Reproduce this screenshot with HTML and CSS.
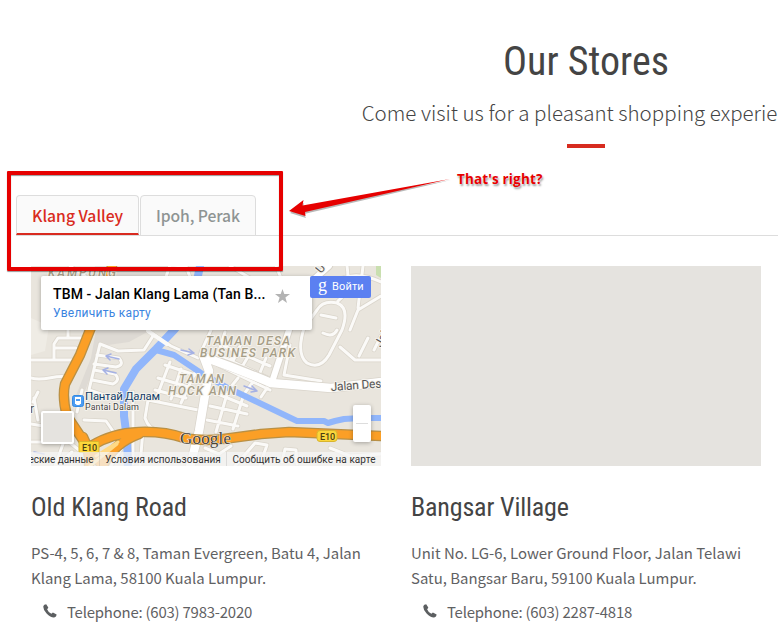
FILE: index.html
```html
<!DOCTYPE html>
<html lang="en">
<head>
<meta charset="utf-8">
<title>Our Stores</title>
<link rel="stylesheet" href="styles.css">
</head>
<body>
<main class="container">
  <header class="heading">
    <h1>Our Stores</h1>
    <p>Come visit us for a pleasant shopping experience</p>
    <div class="rule"></div>
  </header>
  <nav class="tabs">
    <a class="tab active">Klang Valley</a>
    <a class="tab">Ipoh, Perak</a>
  </nav>
  <section class="stores">
    <article class="store">
      <div class="map">
        <svg class="tiles" viewBox="31 266 350 200" width="350" height="200" fill="none" stroke-linecap="round" stroke-linejoin="round">
          <rect x="31" y="266" width="350" height="200" fill="#e9e5dd"/>
          <path fill="#dedad4" d="M96 330h55l-22 12-28 4-14 40-10 24-2-12 16-40zM95 266h73v14H90z"/>
          <path fill="#efece5" d="M31 318l18 8-4 25-14 4z"/>
          <path fill="#c9dfaf" d="M376 266h5v12l-5-3z"/>
          <g stroke="#dad5cb" stroke-width="4.500">
            <path id="minor" d="M31 360h45M54 358v-14l4-6h26M56 348h20M68 338v-9M31 378c14 4 24-4 36-1M33 402l5-10M38 420l-4-22M31 424l24 4M31 442h38l10 8M56 466l16-14M55 466l8-22
            M100 344l18 7 26-1 9-14M100 344l-11 46 18 6M97 355l22 3q6 7-3 9l-22-3M94 370l21 4q6 6-2 10l-21-4M148 331l23 15 27 12
            M165 365l30 10M158 378l34 10M155 390l31 8M170 362l-13 34M181 369l-10 30M195 373l-14 30M148 400l50 10M148 400l-3 18q4 12 14 13l33 4M133 392v72M140 466l3-36M84 420l22 1 9 13M111 466l12-20M82 390l-5 22
            M218 365l30-14M225 332l-9 28M240 346l-11 24M252 350l-13 22M266 358l-9 22M224 346l46 20M218 355l50 23M220 366l50 24M238 378l-8 10M253 382l-9 12M269 385l-8 12M213 392l34 14M210 406l37 8M207 420l31 6M227 394l-11 38M243 397l-10 32
            M211 330l-10 22M290 345l-6 30 37 6M304 328q-8 26 3 35 13 7 22-8l13-25q8-22-5-27-14-3-20 7zM323 333q10 5 14-3M321 315l15 3M350 330l8-20 23-14M340 347l15 13h26M368 338l-9 18M374 350l7-14M347 266q4 26-9 35M363 266l-5 42M339 279q20-8 42 3M235 466l20-23 12 2-7 20M282 462l3-13 11 1 1 14M205 448l14 6 12-8M330 448l20 8 31-2M70 266l15 10M165 280l5-15 16 1 5 14M230 266l20 12M276 266l5 12"/>
          </g>
          <use href="#minor" stroke="#fbfaf8" stroke-width="3"/>
          <path stroke="#91b6fb" stroke-width="6" d="M381 418h-20l-17 1-9 2-7 2-4-2h-27L228 388 201 373 174 355l-18-5"/>
          <path stroke="#91b6fb" stroke-width="8" d="M200 266Q192 310 174 330L156 349l-20 20-12 20v27l3 23 1 28"/>
          <path stroke="#fbfaf8" stroke-width="4" d="M148 331l19 13"/>
          <path stroke="#d9d4cb" stroke-width="10" d="M203 355l6 16-10 60-9 36M207 358q36 12 64 25l60 5 51-6"/>
          <path stroke="#d9d4cb" stroke-width="8" d="M273 379l16-49 15-42 25-22"/>
          <path stroke="#fff" stroke-width="8.500" d="M203 355l6 16-10 60-9 36M204 357q34 12 67 26l60 5 51-6"/>
          <path stroke="#fff" stroke-width="6" d="M273 379l16-49 15-42 25-22"/>
          <g stroke="#b99045" stroke-width="10.500">
            <path id="express" d="M112 266Q104 300 90 330L80 355 65 384Q62 398 67 416L87 446 108 473M83 437Q90 450 89 467M91 446Q112 433 139 432 164 431 184 438 207 442 231 438l30-4 28-2 92 4M102 468Q112 444 139 434"/>
          </g>
          <use href="#express" stroke="#fb9f26" stroke-width="8"/>
          <path stroke="#ffd985" stroke-width="3" d="M96 456l22-14M90 466l27-22"/>
          <path stroke="#a5b1e4" stroke-width="1.500" d="M106 356l13 3m-13-3l5-2m-5 2l4 4M103 370l13 3m-13-3l5-2m-5 2l4 4M181 350l13 3m-5-4l5 4-6 2M244 386l13 5m-5-5l5 5-6 1M34 452l10 2"/>
          <g class="area">
            <text x="48" y="276.500" textLength="68">KAMPUNG</text>
            <text x="206" y="345" textLength="84">TAMAN DESA</text>
            <text x="200" y="357" textLength="95">BUSINES PARK</text>
            <text x="179" y="383" textLength="45">TAMAN</text>
            <text x="168" y="395" textLength="68">HOCK ANN</text>
          </g>
          <g class="street">
            <text x="331" y="391" textLength="57" transform="rotate(-4 331 391)">Jalan Desa</text>
            <text x="321" y="274" transform="rotate(-50 321 274)">U</text>
            <text x="381" y="348" transform="rotate(-60 381 348)">Jala</text>
            <text x="30" y="413">r</text>
          </g>
          <text class="station" x="85" y="400" textLength="75">Пантай Далам</text>
          <text class="station-latin" x="85" y="410" textLength="54">Pantai Dalam</text>
          <rect x="72.500" y="395.500" width="11" height="11" rx="2" fill="#4c9cf2" stroke="#338be5"/>
          <path fill="#fff" d="M75 397h6v7h-6zM74 405h2l1-2h2l1 2h2"/>
          <path fill="#4c9cf2" d="M76 399h4v2h-4z"/>
          <g fill="#fbd63b" stroke="#d9b52d"><rect x="79" y="441.500" width="20" height="11" rx="1"/><rect x="317" y="430.500" width="20" height="11" rx="3"/></g>
          <g class="shield"><text x="82" y="451" textLength="15">E10</text><text x="320" y="440" textLength="15">E10</text></g>
          <text class="google" x="180" y="444" textLength="51">Google</text>
        </svg>
        <div class="place">
          <div class="place-name"><span>TBM - Jalan Klang Lama (Tan B...</span>
            <svg width="15" height="14" viewBox="0 0 15 14"><path fill="#b3b3b3" d="M7.500 0l1.800 5H15l-4.600 3.400L12 14l-4.500-3.300L3 14l1.600-5.600L0 5h5.700z"/></svg>
          </div>
          <a>Увеличить карту</a>
        </div>
        <div class="signin"><b>g</b><span>Войти</span></div>
        <div class="layer"></div>
        <div class="zoomer"></div>
        <div class="terms"><span>Картографические данные</span><span>Условия использования</span><span>Сообщить об ошибке на карте</span></div>
      </div>
      <h2>Old Klang Road</h2>
      <p class="address">PS-4, 5, 6, 7 &amp; 8, Taman Evergreen, Batu 4, Jalan<br>Klang Lama, 58100 Kuala Lumpur.</p>
      <p class="phone"><svg width="14" height="14" viewBox="0 0 14 14"><path fill="#5c5f61" d="M3.200.300L5.300 3.600Q5.300 4.300 4.100 5.200 5 7.900 8.400 9.800L9.900 8.600 13.600 10.600Q13.700 12.700 11.200 13.500 7.700 13.800 3.600 9.600-.200 5.500.400 2 .900.300 3.200.300z"/></svg><span>Telephone: (603) 7983-2020</span></p>
    </article>
    <article class="store">
      <div class="map"></div>
      <h2 class="tight">Bangsar Village</h2>
      <p class="address">Unit No. LG-6, Lower Ground Floor, Jalan Telawi<br>Satu, Bangsar Baru, 59100 Kuala Lumpur.</p>
      <p class="phone"><svg width="14" height="14" viewBox="0 0 14 14"><path fill="#5c5f61" d="M3.200.300L5.300 3.600Q5.300 4.300 4.100 5.200 5 7.900 8.400 9.800L9.900 8.600 13.600 10.600Q13.700 12.700 11.200 13.500 7.700 13.800 3.600 9.600-.200 5.500.400 2 .900.300 3.200.300z"/></svg><span>Telephone: (603) 2287-4818</span></p>
    </article>
  </section>
</main>
<div class="callout"></div>
<svg class="arrow" width="166" height="46" viewBox="286 174 166 46"><path fill="#888" opacity=".6" d="M290 213l14-10-1 5 148-28-147 34 2 4z"/><path fill="#e60000" d="M289 211l14.500-11-1 5.500L450 179 305 212l.500 4z"/></svg>
<div class="note">That's right?</div>
</body>
</html>
```
FILE: styles.css
```css
* { box-sizing: border-box; }
body { margin: 0; width: 778px; height: 632px; overflow: hidden; position: relative; background: #fff; color: #5f6163; font: 14.930px/25px "Noto Sans CJK SC", sans-serif; }
h1, h2, p { margin: 0; font-weight: 400; }
.container { width: 1140px; margin-left: 16px; padding-top: 37px; }
.heading { text-align: center; height: 158px; }
h1, h2 { font-family: "Roboto Condensed", Roboto, sans-serif; font-stretch: 75%; color: #444; }
h1 { font-size: 40px; line-height: 50px; }
.heading p { margin-top: 9px; font-size: 20.520px; line-height: 32px; font-weight: 300; color: #444; white-space: nowrap; }
.rule { width: 38px; height: 4px; margin: 16px auto 0; background: #d72b1f; }
.tabs { display: flex; gap: 1px; height: 41px; border-bottom: 1px solid #ddd; }
.tab { width: 116px; height: 41px; padding: 7px 15px 0; border: 1px solid #ddd; border-radius: 4px 4px 0 0; background: #fafafa; color: #8e9493; font-size: 15.700px; font-weight: 500; letter-spacing: -.1px; white-space: nowrap; }
.tab.active { width: 123px; height: 40px; color: #d92b20; border-bottom: 2px solid #d92b20; letter-spacing: 0; }
.stores { display: flex; gap: 30px; padding: 30px 15px 0; }
.store { width: 350px; }
.map { position: relative; width: 350px; height: 200px; overflow: hidden; background: #e5e3df; font-family: Roboto, sans-serif; }
.tiles { display: block; font-family: Roboto, sans-serif; }
.tiles text { stroke: #f5f2ec; stroke-width: 2px; paint-order: stroke; }
.area { font-size: 12px; font-style: italic; font-weight: 500; fill: #a69d86; }
.street { font-size: 12px; fill: #555; }
.station { font-size: 11.500px; fill: #143e69; }
.station-latin { font-size: 9px; fill: #444; }
.tiles .shield text { font-size: 9px; font-weight: 500; fill: #493d12; stroke: none; }
.tiles .google { font: 17px "Liberation Serif", serif; fill: #494337; stroke: #eee; stroke-width: 1px; }
.place { position: absolute; left: 10px; top: 10px; width: 271px; height: 54px; padding: 9px 12px; background: #fff; border-radius: 2px; box-shadow: 0 1px 4px rgba(0,0,0,.3); }
.place-name { display: flex; justify-content: space-between; height: 18px; padding-right: 10px; color: #000; font-size: 14px; line-height: 18px; font-weight: 500; letter-spacing: .13px; white-space: nowrap; }
.place-name svg { margin-top: 4px; }
.place a { display: block; color: #3a84df; font-size: 12px; line-height: 18px; letter-spacing: .27px; margin-top: 1px; }
.signin { position: absolute; right: 10px; top: 10px; width: 61px; height: 22px; display: flex; padding-left: 8px; gap: 5px; border-radius: 2px; background: #5b80f1; color: #fff; font-size: 11px; line-height: 22px; letter-spacing: .1px; }
.signin b { font: 18px/19px "Liberation Serif", serif; }
.layer { position: absolute; left: 10px; top: 145px; width: 33px; height: 33px; border: 2px solid #fff; border-radius: 2px; background: #e5e3df; box-shadow: 0 1px 4px rgba(0,0,0,.3); }
.zoomer { position: absolute; left: 322px; top: 139px; width: 18px; height: 37px; background: linear-gradient(#ddd, #ddd) center/12px 1px no-repeat #fff; border-radius: 2px; box-shadow: 0 1px 4px rgba(0,0,0,.3); }
.terms { position: absolute; right: 0; bottom: 0; width: 350px; height: 14px; display: flex; justify-content: flex-end; background: rgba(245,245,245,.75); color: #333; font-size: 10px; line-height: 15px; white-space: nowrap; }
.terms span { padding: 0 5.500px 0 5px; }
.terms span + span { border-left: 1px solid rgba(150,150,150,.25); letter-spacing: .06px; }
.terms span:first-child { letter-spacing: -.06px; }
h2 { margin-top: 25px; font-size: 26px; line-height: 32px; letter-spacing: -.05px; }
h2.tight { letter-spacing: -.16px; }
.address { margin-top: 17px; white-space: nowrap; }
.phone { display: flex; margin-top: 9px; padding-left: 12px; gap: 10px; letter-spacing: -.21px; white-space: nowrap; }
.phone svg { margin-top: 5px; }
.callout { position: absolute; left: 7px; top: 171px; width: 276px; height: 100px; border: 4px solid #e60000; border-radius: 1px; box-shadow: 0 1px 1px rgba(0,0,0,.4), inset 0 1px 1px rgba(0,0,0,.4); }
.arrow { position: absolute; left: 286px; top: 174px; }
.note { position: absolute; left: 457px; top: 170px; color: #e60000; font: bold 13.500px/18px "Open Sans", sans-serif; letter-spacing: .15px; white-space: nowrap; text-shadow: 0 0 1px #fff, 1px 2px 2px rgba(0,0,0,.4); }
```
